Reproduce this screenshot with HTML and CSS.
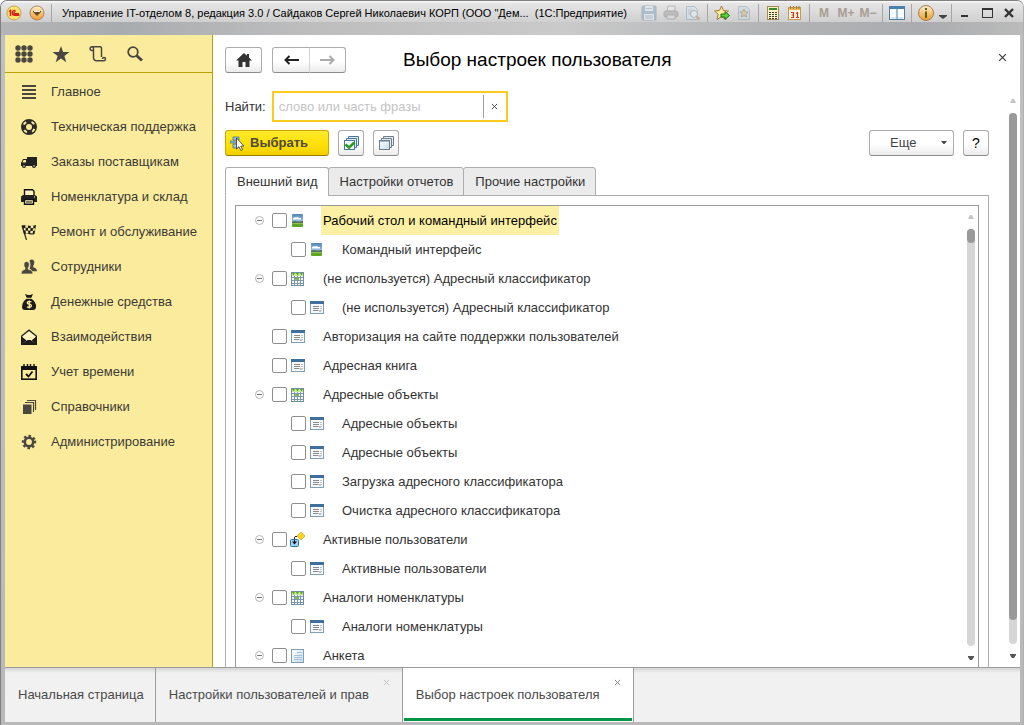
FILE: index.html
```html
<!DOCTYPE html>
<html lang="ru">
<head>
    <meta charset="UTF-8">
    <meta name="viewport" content="width=device-width, initial-scale=1.0">
    <title>Выбор настроек пользователя</title>
    <link rel="stylesheet" href="styles.css">
</head>
<body>
    <!-- icons -->
    <svg class="sprite" aria-hidden="true">
        <defs>
            <linearGradient id="orange" x1="0" y1="0" x2="0" y2="1">
                <stop offset="0" stop-color="#fff0cf"/>
                <stop offset="1" stop-color="#f09a28"/>
            </linearGradient>
            <linearGradient id="sky" x1="0" y1="0" x2="0" y2="1">
                <stop offset="0" stop-color="#4f86b8"/>
                <stop offset="1" stop-color="#d8ecf8"/>
            </linearGradient>
            <linearGradient id="paper" x1="0" y1="0" x2="1" y2="1">
                <stop offset="0" stop-color="#ffffff"/>
                <stop offset="1" stop-color="#c4dcea"/>
            </linearGradient>
        </defs>
        <symbol id="i-image" viewBox="0 0 15 15">
            <rect x="2" y="1" width="11" height="13" rx="1" fill="url(#sky)"/>
            <path d="M3 5.500q1.500-2 3-1 2-1 3 .5h2v1.500H3z" fill="#fff"/>
            <path d="M2 8.500l3-.5 4 .5 4-.5v2.500H2z" fill="#56705c"/>
            <path d="M2 10h11v3q0 1-1 1H3q-1 0-1-1z" fill="#5fa524"/>
            <path d="M2 10h11v1H2z" fill="#8fc24c"/>
        </symbol>
        <symbol id="i-table" viewBox="0 0 15 15">
            <rect x="1.500" y="1.500" width="12" height="13" fill="#fff" stroke="#6f8fa3"/>
            <path d="M2 2h11v3H2z" fill="#c5e89a"/>
            <path d="M5 7h4v3H5z" fill="#7cc23a"/>
            <path d="M4.500 5v9M7.500 5v9M10.500 5v9M2 6.500h11M2 9.500h11M2 12.500h11" stroke="#7d98a9" fill="none"/>
            <path d="M2 2h3L3.500 4.500zM6 2h3L7.500 4.500zM10 2h3l-1.500 2.500z" fill="#5aa51c"/>
        </symbol>
        <symbol id="i-form" viewBox="0 0 15 15">
            <rect x="1.500" y="1.500" width="13" height="12" fill="#f4f8fb" stroke="#7f9fb4"/>
            <path d="M1 1h14v3H1z" fill="#3f6f9c"/>
            <path d="M4 6.500h6M4 8.500h6M4 10.500h5" stroke="#8a8a8a"/>
            <path d="M11 6.500h2M11 8.500h2M9 10.500h4M10 11.500h2" stroke="#c2c2c2"/>
        </symbol>
        <symbol id="i-doc" viewBox="0 0 15 15">
            <rect x="1.500" y="1.500" width="12" height="13" fill="url(#paper)" stroke="#7f9fb4"/>
            <path d="M7 4.500h5M4 7.500h8M4 9.500h8M4 11.500h8" stroke="#a6c2d6"/>
        </symbol>
        <symbol id="i-process" viewBox="0 0 15 15">
            <path d="M11 0l4 4-4 4-4-4z" fill="#ffd51e" stroke="#d69c1c" stroke-width=".7"/>
            <rect x=".5" y="7.500" width="8" height="7" rx="1" fill="#9fd4f5" stroke="#2e6d9e"/>
            <path d="M7 4.500H4.500V11" fill="none" stroke="#222" stroke-dasharray="2 1"/>
            <path d="M2 9.500h5l-2.500 3z" fill="#111"/>
        </symbol>
        <symbol id="i-minus" viewBox="0 0 9 9">
            <circle cx="4.500" cy="4.500" r="4" fill="#fff" stroke="#b4b4b4"/>
            <path d="M2 4.500h5" stroke="#777"/>
        </symbol>
        <symbol id="i-x" viewBox="0 0 8 8">
            <path d="M1 1l6 6M7 1l-6 6" stroke="currentColor" fill="none"/>
        </symbol>
        <symbol id="i-up" viewBox="0 0 6 4"><path d="M0 4l2-4h2l2 4z" fill="#c4c4c4"/></symbol>
        <symbol id="i-down" viewBox="0 0 6 4"><path d="M0 0h6v1L4 4H2L0 1z" fill="#555"/></symbol>
    </svg>

    <div class="window">
        <header class="titlebar">
            <button class="title-btn round" aria-label="1С">
                <svg width="16" height="16" viewBox="0 0 16 16"><circle cx="8" cy="8" r="7" fill="#ffe36e" stroke="#c9a04a"/><path d="M3 6.500l1.500-1V11M9.500 6.500Q8.500 5 7 6q-1 1-.5 3 .8 1.500 2 1.200h5M9 8H8v.8h5" fill="none" stroke="#d8231d" stroke-width="1.500"/></svg>
            </button>
            <button class="title-btn round" aria-label="Меню">
                <svg width="16" height="16" viewBox="0 0 16 16"><circle cx="8" cy="8" r="7" fill="url(#orange)" stroke="#a8865a"/><path d="M4 6h8v1l-4 4-4-4z" fill="#6b4a20"/><path d="M5 6.500h6" stroke="#fff"/></svg>
            </button>
            <span class="sep"></span>
            <span class="window-name">Управление IT-отделом 8, редакция 3.0 / Сайдаков Сергей Николаевич КОРП (ООО "Дем...&nbsp; (1С:Предприятие)</span>

            <button class="title-btn off" aria-label="Сохранить">
                <svg width="16" height="16" viewBox="0 0 16 16"><rect x="1" y="1" width="14" height="14" rx="1" fill="#7fa2bd" stroke="#6f8ea6"/><path d="M4 1h8v5H4z" fill="#dbe7ef"/><path d="M3 9h10v6H3z" fill="#e8eef2"/><path d="M4 11h8M4 13h8M5 3.500h6" stroke="#8aa6bb"/></svg>
            </button>
            <button class="title-btn off" aria-label="Печать">
                <svg width="16" height="16" viewBox="0 0 16 16"><path d="M5 1h7v5H4z" fill="#eee" stroke="#8c8c8c"/><rect x="1" y="6" width="14" height="6" rx="2" fill="#a2a2a2" stroke="#858585"/><path d="M4 10h8v4H4z" fill="#ddd" stroke="#8c8c8c"/><path d="M12 8h2" stroke="#da8a2c"/></svg>
            </button>
            <button class="title-btn off" aria-label="Предварительный просмотр">
                <svg width="16" height="16" viewBox="0 0 16 16"><path d="M1.500 1.500h8l3 3v10h-11z" fill="#d6e4ee" stroke="#7f9fb6"/><path d="M3 5h5M3 7h4M3 9h3" stroke="#8faabd"/><circle cx="9" cy="9" r="3.500" fill="#eaf4fa" stroke="#7893a6"/><path d="M11.500 11.500l3 3" stroke="#b08350" stroke-width="2"/></svg>
            </button>
            <span class="sep"></span>
            <button class="title-btn" aria-label="Добавить в избранное">
                <svg width="16" height="16" viewBox="0 0 16 16"><path d="M7.500 1l2 4.500 5 .5-3.700 3.300L12 14.500l-4.500-2.700L3 14.500l1.200-5.200L.5 6l5-.5z" fill="#ffe9a0" stroke="#a47a38"/><path d="M7 9h4V6.500l4.500 4-4.500 4V12H7z" fill="#5ed03a" stroke="#16730d"/></svg>
            </button>
            <button class="title-btn off" aria-label="Избранное">
                <svg width="16" height="16" viewBox="0 0 16 16"><path d="M2.500 1.500h8l3 3v10h-11z" fill="#cbd9e2" stroke="#8aa3b3"/><path d="M8 4l1.200 2.800 3 .2-2.300 2 .8 3L8 10.500 5.300 12l.8-3-2.300-2 3-.2z" fill="#d7bd8d" stroke="#8b7450"/></svg>
            </button>
            <span class="sep"></span>
            <button class="title-btn" aria-label="Калькулятор">
                <svg width="16" height="16" viewBox="0 0 16 16"><rect x="2.500" y="1.500" width="11" height="13" fill="#fff3c6" stroke="#a58a58"/><path d="M4 3h8v2H4z" fill="#3c8a25"/><path d="M4 7.500h8M4 9.500h8M4 11.500h8M4 13.500h8" stroke="#4a3a28" stroke-dasharray="2 1"/></svg>
            </button>
            <button class="title-btn" aria-label="Календарь">
                <svg width="16" height="16" viewBox="0 0 16 16"><rect x="1.500" y="2.500" width="12" height="12" fill="#fffbe8" stroke="#c69a4d"/><path d="M2 3h11v2H2z" fill="#efb94e"/><path d="M3.500 1v3M6.500 1v3M9.500 1v3M12 1v3" stroke="#a9763a"/><path d="M4 7.500h2.500v5H4M4.500 10h2M9 8.500l1.500-1v5M9 12.500h3" fill="none" stroke="#d8331c" stroke-width="1.200"/></svg>
            </button>
            <span class="sep"></span>
            <button class="title-btn memory">M</button>
            <button class="title-btn memory">M+</button>
            <button class="title-btn memory">M−</button>
            <span class="sep"></span>
            <button class="title-btn" aria-label="Панели">
                <svg width="16" height="16" viewBox="0 0 16 16"><rect x=".5" y="1.500" width="15" height="13" fill="#f5fbff" stroke="#4d7f9f"/><path d="M0 1h16v3H0z" fill="#4a7fae"/><path d="M8 4v10" stroke="#4d7f9f"/><path d="M2 13h5M9 13h5" stroke="#b7d6ea"/></svg>
            </button>
            <span class="sep"></span>
            <button class="title-btn" aria-label="Справка">
                <svg width="16" height="16" viewBox="0 0 16 16"><circle cx="8" cy="8" r="7.500" fill="url(#orange)" stroke="#a07f50"/><path d="M8 3v2M8 6.500V13" stroke="#54651d" stroke-width="2"/></svg>
            </button>
            <button class="title-btn narrow" aria-label="Ещё">
                <svg width="8" height="16" viewBox="0 0 8 16"><path d="M0 10h8v1l-4 3-4-3z" fill="#444"/></svg>
            </button>
            <span class="sep"></span>
            <button class="title-btn" aria-label="Свернуть">
                <svg width="16" height="16" viewBox="0 0 16 16"><path d="M3 11h7" stroke="#333" stroke-width="2"/></svg>
            </button>
            <button class="title-btn" aria-label="Развернуть">
                <svg width="16" height="16" viewBox="0 0 16 16"><rect x="2.500" y="4.500" width="10" height="8" fill="none" stroke="#333"/><path d="M2 4h11" stroke="#333" stroke-width="2"/></svg>
            </button>
            <button class="title-btn" aria-label="Закрыть">
                <svg width="16" height="16" viewBox="0 0 16 16"><path d="M3 4l8 8M11 4l-8 8" stroke="#333" stroke-width="2.400"/></svg>
            </button>
        </header>

        <div class="workspace">
            <aside class="sidebar">
                <div class="side-tools">
                    <button class="side-tool" aria-label="Меню функций">
                        <svg width="18" height="18" viewBox="0 0 18 18" fill="#4a4740"><circle cx="3" cy="3" r="2.700"/><circle cx="9" cy="3" r="2.700"/><circle cx="15" cy="3" r="2.700"/><circle cx="3" cy="9" r="2.700"/><circle cx="9" cy="9" r="2.700"/><circle cx="15" cy="9" r="2.700"/><circle cx="3" cy="15" r="2.700"/><circle cx="9" cy="15" r="2.700"/><circle cx="15" cy="15" r="2.700"/></svg>
                    </button>
                    <button class="side-tool" aria-label="Избранное">
                        <svg width="18" height="18" viewBox="0 0 18 18" fill="#4a4740"><path d="M9 1l2.100 6H17.500l-5.100 4 1.900 6.200L9 13.500l-5.300 3.700L5.600 11 .5 7h6.400z"/></svg>
                    </button>
                    <button class="side-tool" aria-label="История">
                        <svg width="18" height="18" viewBox="0 0 18 18" fill="none" stroke="#4a4740" stroke-width="1.500"><path d="M4 5.500H2.500Q1 5 1 3.500T3 1.700h8q1.500 0 1.500 2V12M3 1.700q1.500.3 1.500 2V13q.3 2.800 3 2.800h7.500q1.500-.3 1.500-1.800T15 12.500q-1.500 0-1.500 1.500"/></svg>
                    </button>
                    <button class="side-tool" aria-label="Поиск">
                        <svg width="18" height="18" viewBox="0 0 18 18" fill="none" stroke="#4a4740"><circle cx="7" cy="7" r="4.800" stroke-width="1.800"/><path d="M10.500 10.500l5.500 5" stroke-width="3"/></svg>
                    </button>
                </div>
                <nav class="menu">
                    <a class="menu-item" href="#"><svg width="16" height="16" viewBox="0 0 16 16"><path d="M1 2h14M1 6h14M1 10h14M1 14h14" stroke="#4a4740" stroke-width="1.800"/></svg>Главное</a>
                    <a class="menu-item" href="#"><svg width="16" height="16" viewBox="0 0 16 16"><circle cx="8" cy="8" r="5.500" fill="none" stroke="#2b2a26" stroke-width="5"/><circle cx="8" cy="8" r="5.700" fill="none" stroke="#fbec9d" stroke-width="2" stroke-dasharray="3.500 5.450" transform="rotate(20 8 8)"/></svg>Техническая поддержка</a>
                    <a class="menu-item" href="#"><svg width="16" height="16" viewBox="0 0 16 16"><path d="M6 3h10v9H0V9l2-4h4z" fill="#222"/><path d="M2.500 6H5v2.500H1.500z" fill="#fbec9d"/><circle cx="3" cy="12" r="2" fill="#222"/><circle cx="13" cy="12" r="2" fill="#222"/><circle cx="3" cy="12" r=".8" fill="#fbec9d"/><circle cx="13" cy="12" r=".8" fill="#fbec9d"/></svg>Заказы поставщикам</a>
                    <a class="menu-item" href="#"><svg width="16" height="16" viewBox="0 0 16 16"><path d="M3.500 6V.8h8l1.500 1.500V6" fill="#fff5c0" stroke="#111" stroke-width="1.400"/><path d="M2 6h12l2 1.500V13H0V7.500z" fill="#222"/><path d="M3.500 10.500h9v4.700h-9z" fill="#fff5c0" stroke="#111" stroke-width="1.400"/><path d="M5 13h6" stroke="#111"/><path d="M13 8h1" stroke="#fff"/></svg>Номенклатура и склад</a>
                    <a class="menu-item" href="#"><svg width="16" height="16" viewBox="0 0 16 16"><path d="M1 1.500Q4 .5 7 1.500t8-.5l-1.500 9q-3 1-5.500 0t-5 .5z" fill="#1c1c1a"/><path d="M4 1.200h3v2.500H4.500zM10 1.500l2.500.2-.4 2.500-2.500-.2zM7 4l2.500.2-.2 2.600L7 6.500zM12 4.500l2-.2-.3 2.500-2 .2zM2.500 4l2 .1.300 2.300-2-.1zM4.500 6.800l2.500-.1.300 2.500-2.300.2zM9.500 7l2.500.1-.3 2.300-2.500-.2z" fill="#fbec9d"/><path d="M1 1.500L5.500 16" stroke="#222" stroke-width="1.200"/></svg>Ремонт и обслуживание</a>
                    <a class="menu-item" href="#"><svg width="16" height="16" viewBox="0 0 16 16" fill="#4a4740"><path d="M8.500 1.500Q11-.5 13 1.800q.8 3-.8 5v1.500q3.800.8 3.800 4h-5Q10 10 8.500 9.500q1.800-3 0-8z"/><path d="M3 4Q5.500.8 8.200 4q.6 3-1 5v1.200Q12 11 12 15H0q0-4 4-4.800V9Q2.400 7 3 4z" stroke="#fbec9d" stroke-width=".7"/></svg>Сотрудники</a>
                    <a class="menu-item" href="#"><svg width="16" height="16" viewBox="0 0 16 16"><path d="M4 0l3 1h2l3-1-2 4.500Q15.500 8 15 13q-.2 3-3 3H4q-3 0-3-3 .2-6 5-8.500z" fill="#1c1c1a"/><path d="M5.500 4.300h5" stroke="#fbec9d"/><path d="M10.500 8Q8 6.800 6.500 8q-.8 1.800 1.700 2.200 2.700.4 2 2.300-1.500 1.500-4.200.3M8.300 6.500v8" fill="none" stroke="#fbec9d" stroke-width="1.300"/></svg>Денежные средства</a>
                    <a class="menu-item" href="#"><svg width="16" height="16" viewBox="0 0 16 16"><path d="M.7 7L8 1.200 15.300 7v8H.7z" fill="#fff5c0" stroke="#222" stroke-width="1.300"/><path d="M0 7l5.500 4.500L0 16zM16 7l-5.500 4.500L16 16zM0 16l6.500-5h3l6.500 5z" fill="#1c1c1a"/></svg>Взаимодействия</a>
                    <a class="menu-item" href="#"><svg width="16" height="16" viewBox="0 0 16 16"><rect x=".8" y="2.800" width="14.400" height="12.400" fill="#fbec9d" stroke="#111" stroke-width="1.600"/><path d="M0 2h16v4H0z" fill="#111"/><path d="M3 0v3M6.500 0v3M9.500 0v3M13 0v3" stroke="#111" stroke-width="1.400"/><path d="M5 10l2.500 2.500L11.500 7.500" fill="none" stroke="#111" stroke-width="1.800"/></svg>Учет времени</a>
                    <a class="menu-item" href="#"><svg width="16" height="16" viewBox="0 0 16 16"><path d="M2 5.500h8.500V15H2z" fill="#4a4740"/><path d="M4 3.500h8.500V13M6 1.500h8.500V11" fill="none" stroke="#4a4740" stroke-width="1.200"/></svg>Справочники</a>
                    <a class="menu-item" href="#"><svg width="16" height="16" viewBox="0 0 16 16" fill="none" stroke="#4a4740"><circle cx="8" cy="8" r="4.200" stroke-width="2.600"/><circle cx="8" cy="8" r="6" stroke-width="2.500" stroke-dasharray="2.400 2.312" transform="rotate(-11 8 8)"/></svg>Администрирование</a>
                </nav>
            </aside>

            <main class="page">
                <div class="page-head">
                    <button class="btn home" aria-label="Домой"><svg width="16" height="14" viewBox="0 0 16 14"><path d="M8 0L0 7.500h2.500V14h4V9h3v5h4V7.500H16l-3-3V1h-2.200v1.700z" fill="#333"/></svg></button>
                    <div class="history">
                        <button class="btn" aria-label="Назад"><svg width="15" height="10" viewBox="0 0 15 10"><path d="M15 5H3M5.500 1L1.500 5l4 4" fill="none" stroke="#222" stroke-width="2"/></svg></button>
                        <button class="btn" aria-label="Вперед" disabled><svg width="15" height="10" viewBox="0 0 15 10"><path d="M0 5h12M9.500 1l4 4-4 4" fill="none" stroke="#aaa" stroke-width="2"/></svg></button>
                    </div>
                    <h1>Выбор настроек пользователя</h1>
                    <button class="plain-x" aria-label="Закрыть форму"><svg width="9" height="9" viewBox="0 0 8 8"><use href="#i-x"/></svg></button>
                </div>

                <div class="page-body">
                    <div class="form">
                        <div class="find">
                            <label for="find">Найти:</label>
                            <div class="find-box">
                                <input id="find" type="text" placeholder="слово или часть фразы">
                                <button class="clear" aria-label="Очистить"><svg width="7" height="7" viewBox="0 0 8 8"><use href="#i-x"/></svg></button>
                            </div>
                        </div>

                        <div class="commands">
                            <button class="btn choose"><svg width="16" height="16" viewBox="0 0 16 16"><path d="M3 2h6v3H3zM0 6h7v2H0zM3 9h5v4H3z" fill="#9cc7e2" stroke="#3f6f94" stroke-width=".8"/><path d="M6.500 3v11l2.500-2.300 1.800 3.800 1.800-.9-1.800-3.600h3.200z" fill="#fff" stroke="#333" stroke-width=".8"/></svg>Выбрать</button>
                            <button class="btn square" aria-label="Отметить все"><svg width="16" height="16" viewBox="0 0 16 16"><path d="M5.500 1.500h10v9h-10z" fill="#dcebf5" stroke="#4c7797"/><path d="M3.500 3.500h10v9h-10z" fill="#dcebf5" stroke="#4c7797"/><rect x="1.500" y="5.500" width="10" height="9" fill="#f3f9fd" stroke="#4c7797"/><path d="M2.500 9.500L6 12.500l5.500-5" fill="none" stroke="#2d9a1d" stroke-width="2.600"/></svg></button>
                            <button class="btn square" aria-label="Снять отметки"><svg width="16" height="16" viewBox="0 0 16 16"><path d="M5.500 1.500h10v9h-10z" fill="#e4ecf1" stroke="#6d7e8a"/><path d="M3.500 3.500h10v9h-10z" fill="#e4ecf1" stroke="#6d7e8a"/><rect x="1.500" y="5.500" width="10" height="9" fill="url(#paper)" stroke="#6d7e8a"/><path d="M2 6.500h9" stroke="#a5bccb"/></svg></button>
                            <button class="btn more">Еще<svg width="6" height="4" viewBox="0 0 6 4"><path d="M0 0h6L3.500 3h-1z" fill="#444"/></svg></button>
                            <button class="btn square help">?</button>
                        </div>

                        <div class="tabs" role="tablist">
                            <button class="tab active" role="tab" aria-selected="true">Внешний вид</button>
                            <button class="tab" role="tab">Настройки отчетов</button>
                            <button class="tab" role="tab">Прочие настройки</button>
                        </div>

                        <div class="panel">
                            <div class="tree-box">
                                <ul class="tree">
                                    <li class="row selected"><button class="fold" aria-label="Свернуть"><svg><use href="#i-minus"/></svg></button><label><input type="checkbox"><svg class="pic"><use href="#i-image"/></svg><span>Рабочий стол и командный интерфейс</span></label></li>
                                    <li class="row child"><label><input type="checkbox"><svg class="pic"><use href="#i-image"/></svg><span>Командный интерфейс</span></label></li>
                                    <li class="row"><button class="fold" aria-label="Свернуть"><svg><use href="#i-minus"/></svg></button><label><input type="checkbox"><svg class="pic"><use href="#i-table"/></svg><span>(не используется) Адресный классификатор</span></label></li>
                                    <li class="row child"><label><input type="checkbox"><svg class="pic"><use href="#i-form"/></svg><span>(не используется) Адресный классификатор</span></label></li>
                                    <li class="row leaf"><label><input type="checkbox"><svg class="pic"><use href="#i-form"/></svg><span>Авторизация на сайте поддержки пользователей</span></label></li>
                                    <li class="row leaf"><label><input type="checkbox"><svg class="pic"><use href="#i-form"/></svg><span>Адресная книга</span></label></li>
                                    <li class="row"><button class="fold" aria-label="Свернуть"><svg><use href="#i-minus"/></svg></button><label><input type="checkbox"><svg class="pic"><use href="#i-table"/></svg><span>Адресные объекты</span></label></li>
                                    <li class="row child"><label><input type="checkbox"><svg class="pic"><use href="#i-form"/></svg><span>Адресные объекты</span></label></li>
                                    <li class="row child"><label><input type="checkbox"><svg class="pic"><use href="#i-form"/></svg><span>Адресные объекты</span></label></li>
                                    <li class="row child"><label><input type="checkbox"><svg class="pic"><use href="#i-form"/></svg><span>Загрузка адресного классификатора</span></label></li>
                                    <li class="row child"><label><input type="checkbox"><svg class="pic"><use href="#i-form"/></svg><span>Очистка адресного классификатора</span></label></li>
                                    <li class="row"><button class="fold" aria-label="Свернуть"><svg><use href="#i-minus"/></svg></button><label><input type="checkbox"><svg class="pic"><use href="#i-process"/></svg><span>Активные пользователи</span></label></li>
                                    <li class="row child"><label><input type="checkbox"><svg class="pic"><use href="#i-form"/></svg><span>Активные пользователи</span></label></li>
                                    <li class="row"><button class="fold" aria-label="Свернуть"><svg><use href="#i-minus"/></svg></button><label><input type="checkbox"><svg class="pic"><use href="#i-table"/></svg><span>Аналоги номенклатуры</span></label></li>
                                    <li class="row child"><label><input type="checkbox"><svg class="pic"><use href="#i-form"/></svg><span>Аналоги номенклатуры</span></label></li>
                                    <li class="row"><button class="fold" aria-label="Свернуть"><svg><use href="#i-minus"/></svg></button><label><input type="checkbox"><svg class="pic"><use href="#i-doc"/></svg><span>Анкета</span></label></li>
                                </ul>
                                <div class="scroll tree-scroll">
                                    <svg class="arrow"><use href="#i-up"/></svg>
                                    <div class="track"><div class="thumb"></div></div>
                                    <svg class="arrow"><use href="#i-down"/></svg>
                                </div>
                            </div>
                        </div>
                    </div>
                    <div class="scroll page-scroll">
                        <svg class="arrow"><use href="#i-up"/></svg>
                        <div class="track"><div class="thumb"></div></div>
                        <svg class="arrow"><use href="#i-down"/></svg>
                    </div>
                </div>
            </main>
        </div>

        <footer class="open-pages">
            <div class="open-page start"><button class="open-name">Начальная страница</button></div>
            <div class="open-page"><button class="open-name">Настройки пользователей и прав</button><button class="open-x faded" aria-label="Закрыть"><svg width="7" height="7" viewBox="0 0 8 8"><use href="#i-x"/></svg></button></div>
            <div class="open-page current"><button class="open-name">Выбор настроек пользователя</button><button class="open-x" aria-label="Закрыть"><svg width="7" height="7" viewBox="0 0 8 8"><use href="#i-x"/></svg></button></div>
        </footer>
    </div>
</body>
</html>
```
FILE: styles.css
```css
* {
    box-sizing: border-box;
}
body {
    margin: 0;
    background-color: #fff;
    color: #333;
    font-family: "Liberation Sans", Arial, sans-serif;
    font-size: 13px;
    line-height: 16px;
}
button {
    margin: 0;
    padding: 0;
    border: none;
    background: none;
    color: inherit;
    font: inherit;
}
svg {
    display: block;
    flex: none;
}
.sprite {
    position: absolute;
    width: 0;
    height: 0;
}

/* window */
.window {
    display: flex;
    flex-direction: column;
    height: 100vh;
    padding: 0 3px 3px 4px;
    border: 1px solid #808080;
    border-right-color: #b0b0b0;
    border-bottom: none;
    border-radius: 7px 7px 0 0;
    background: linear-gradient(#bfc0c2, #b9b9b9);
    overflow: hidden;
}
.titlebar {
    display: flex;
    align-items: center;
    flex: none;
    height: 34px;
    margin: 0 -3px 0 -4px;
    padding: 0 2px 10px 1px;
    background: linear-gradient(#fff 0, #e6e6e6 2px, #cfcfcf 21px, transparent 21px), linear-gradient(100deg, #b4b5b6, #a9acaf 12%, #bdbdbe 30%, #cacaca 55%, #b2b4b6 75%, #aaacaf 90%, #bbb);
}
.title-btn {
    display: flex;
    align-items: center;
    justify-content: center;
    width: 22px;
    height: 22px;
}
.title-btn.round {
    width: 23px;
}
.title-btn.narrow {
    width: 11px;
}
.title-btn.off {
    opacity: 0.5;
}
.title-btn.memory {
    color: #a99c92;
    font-size: 12px;
    font-weight: bold;
}
.sep {
    width: 1px;
    height: 18px;
    margin: 0 3px;
    background-color: #a6a6a6;
}
.window-name {
    flex: 1;
    padding-left: 7px;
    color: #000;
    font-size: 11px;
    white-space: nowrap;
    overflow: hidden;
}
.workspace {
    display: flex;
    flex: 1;
    min-height: 0;
}

/* sections */
.sidebar {
    flex: none;
    width: 208px;
    border-right: 1px solid #b9a200;
    background-color: #fbec9d;
}
.side-tools {
    display: flex;
    gap: 19px;
    height: 38px;
    padding: 0 10px;
    border-bottom: 1px solid #b9a200;
}
.side-tool {
    display: flex;
    align-items: center;
}
.menu {
    padding-top: 1px;
}
.menu-item {
    display: flex;
    align-items: center;
    gap: 14px;
    height: 35px;
    padding-left: 16px;
    color: #3b3a36;
    text-decoration: none;
}

/* page */
.page {
    display: flex;
    flex-direction: column;
    flex: 1;
    min-width: 0;
    padding: 12px 3px 0 12px;
    background-color: #fff;
}
.page-head {
    display: flex;
    align-items: center;
    flex: none;
    padding-right: 10px;
}
.page-head h1 {
    flex: 1;
    margin: 0 0 0 57px;
    color: #000;
    font-size: 19px;
    font-weight: normal;
    line-height: 26px;
}
.btn {
    display: flex;
    align-items: center;
    justify-content: center;
    height: 26px;
    border: 1px solid #acacac;
    border-bottom-color: #8c8c8c;
    border-radius: 3px;
    background: linear-gradient(#fff 55%, #ebebeb);
}
.home {
    width: 37px;
}
.history {
    display: flex;
    margin-left: 10px;
}
.history .btn {
    width: 38px;
    border-radius: 3px 0 0 3px;
}
.history .btn + .btn {
    width: 37px;
    border-left: 1px solid #d4d4d4;
    margin-left: -1px;
    border-radius: 0 3px 3px 0;
}
.plain-x {
    align-self: flex-start;
    height: 20px;
}
.page-body {
    display: flex;
    flex: 1;
    min-height: 0;
    padding-top: 18px;
}
.form {
    display: flex;
    flex-direction: column;
    flex: 1;
    min-width: 0;
}
.find {
    display: flex;
    align-items: center;
    flex: none;
    gap: 6px;
}
.find-box {
    display: flex;
    align-items: center;
    width: 236px;
    height: 31px;
    border: 2px solid #fccb1c;
}
.find-box input {
    flex: 1;
    min-width: 0;
    height: 23px;
    padding: 0 5px;
    border: none;
    border-right: 1px solid #a0a0a0;
    outline: none;
    font: inherit;
}
.find-box input::placeholder {
    color: #c4c4c4;
}
.clear {
    display: flex;
    align-items: center;
    justify-content: center;
    width: 22px;
    height: 23px;
}
.commands {
    display: flex;
    flex: none;
    gap: 9px;
    margin: 8px 0 11px;
}
.choose {
    justify-content: flex-start;
    gap: 4px;
    width: 104px;
    padding-left: 4px;
    border-color: #c9a800;
    border-bottom-color: #967d00;
    background: linear-gradient(#ffe92e, #ffe000 60%, #f2cf00);
    color: #4d4a3c;
    font-weight: bold;
}
.square {
    width: 26px;
}
.more {
    justify-content: space-between;
    width: 85px;
    margin-left: auto;
    padding: 0 6px 0 20px;
    color: #444;
}
.help {
    color: #000;
    font-size: 14px;
}
.tabs {
    position: relative;
    display: flex;
    flex: none;
    margin-bottom: -1px;
}
.tab {
    height: 29px;
    margin-left: -1px;
    padding: 0 10px 0 11px;
    border: 1px solid #acacac;
    border-radius: 3px 3px 0 0;
    background-color: #ebebeb;
}
.tab.active {
    margin-left: 0;
    border-bottom-color: #fff;
    background-color: #fff;
}
.panel {
    display: flex;
    flex: 1;
    min-height: 0;
    padding: 9px 9px 0;
    border: 1px solid #acacac;
    border-bottom: none;
}

/* tree */
.tree-box {
    display: flex;
    flex: 1;
    min-width: 0;
    border: 1px solid #999;
    border-bottom: none;
}
.tree {
    flex: 1;
    margin: 0;
    padding: 0 0 0 19px;
    list-style: none;
    overflow: hidden;
}
.row {
    display: flex;
    align-items: center;
    height: 29px;
}
.row.leaf {
    padding-left: 17px;
}
.row.child {
    padding-left: 36px;
}
.row label {
    display: flex;
    align-items: center;
}
.row span {
    margin-left: 16px;
    padding: 0 2px;
    line-height: 29px;
    white-space: nowrap;
}
.row.selected span {
    background-color: #fdf0a4;
    color: #000;
}
.fold {
    width: 17px;
    height: 11px;
}
.fold svg {
    width: 9px;
    height: 9px;
}
.row input {
    appearance: none;
    width: 15px;
    height: 15px;
    margin: 0;
    border: 1px solid #8e8e8e;
    border-radius: 2px;
    background-color: #fff;
}
.pic {
    width: 15px;
    height: 15px;
    margin-left: 3px;
}

/* scroll bars */
.scroll {
    display: flex;
    flex-direction: column;
    align-items: center;
    flex: none;
    width: 8px;
}
.tree-scroll {
    margin-right: 3px;
    padding: 9px 0 7px;
}
.page-scroll {
    margin-left: 20px;
    padding: 8px 0 9px;
}
.arrow {
    width: 6px;
    height: 4px;
}
.track {
    flex: 1;
    width: 8px;
    margin: 10px 0;
    border-radius: 4px;
    background-color: #d6d6d6;
}
.thumb {
    height: 14px;
    border-radius: 4px;
    background-color: #999;
}
.page-scroll .thumb {
    height: calc(100% - 24px);
}

/* open pages */
.open-pages {
    display: flex;
    flex: none;
    height: 55px;
    border-top: 1px solid #9c9c9c;
    background: linear-gradient(#d4d4d4, #f1f1f1 5px);
}
.open-page {
    position: relative;
    display: flex;
    padding: 0 33px 0 13px;
    border-right: 1px solid #9c9c9c;
    color: #4a4a4a;
}
.open-page.start {
    padding-right: 11px;
}
.open-page.current {
    background-color: #fff;
}
.open-page.current::after {
    content: "";
    position: absolute;
    left: 1px;
    right: 1px;
    bottom: 1px;
    height: 3px;
    background-color: #009646;
}
.open-x {
    position: absolute;
    top: 11px;
    right: 12px;
    color: #777;
}
.open-x.faded {
    color: #bbb;
}
```
